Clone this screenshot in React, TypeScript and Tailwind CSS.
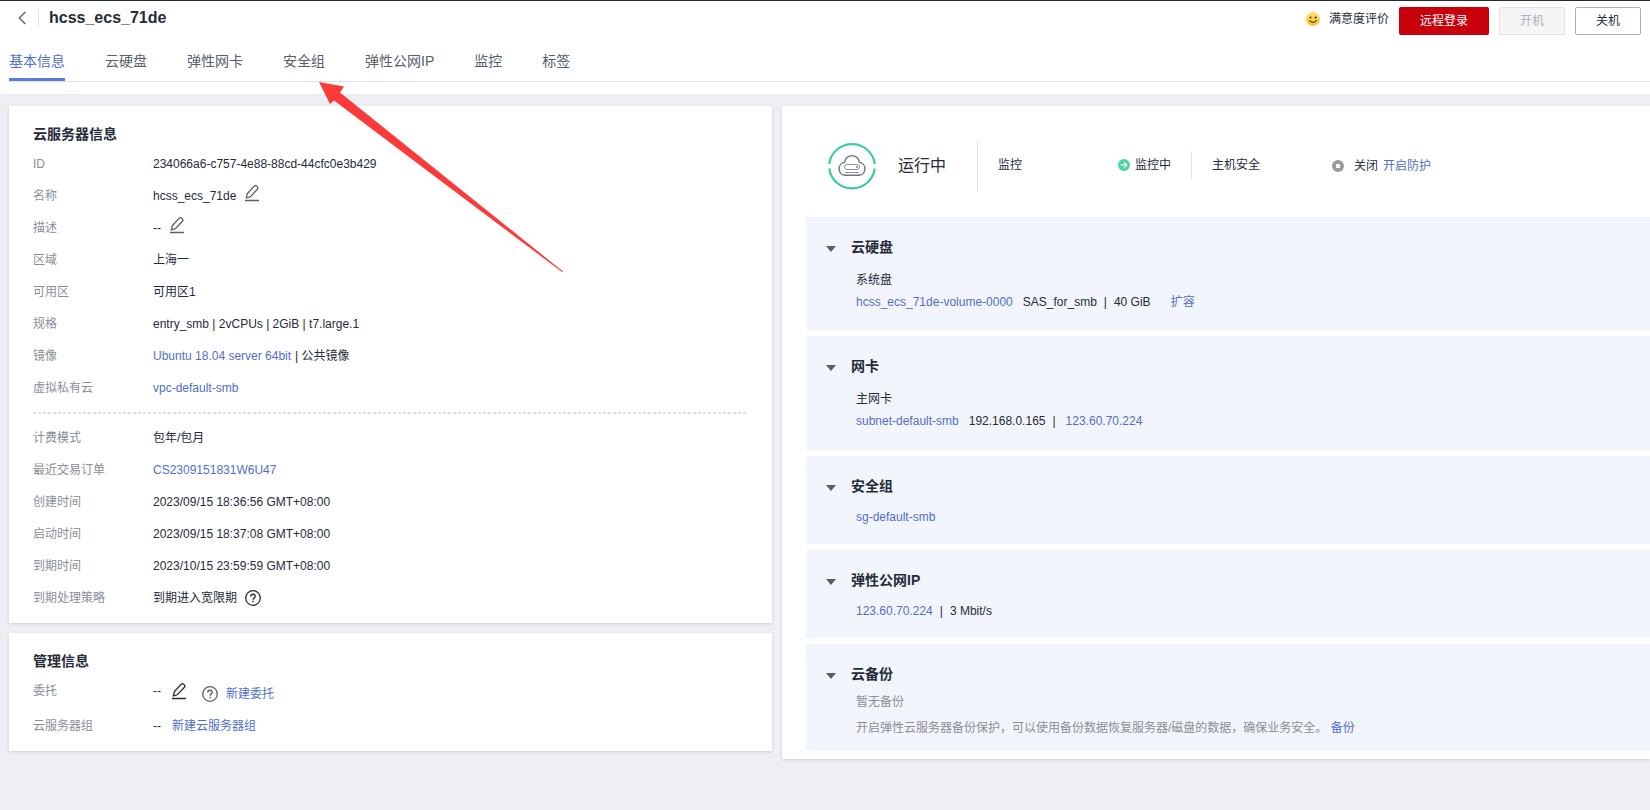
import type { ReactNode } from 'react'

const tabs = ['基本信息', '云硬盘', '弹性网卡', '安全组', '弹性公网IP', '监控', '标签']

const EditIcon = ({ className = 'text-[#575d6c]' }: { className?: string }) => (
  <svg width="14" height="22" viewBox="0 0 14 22" fill="none" stroke="currentColor" className={className}>
    <path d="M1.3 13 2.3 8.8 9 1.4Q10.3.1 11.7 1.2L12.2 1.7Q13.5 2.9 12.5 4.2L5.4 11.6Z" strokeWidth="1.3" strokeLinejoin="round" />
    <path d="M0 15.5H14" strokeWidth="1.5" />
  </svg>
)

const HelpIcon = ({ className = 'text-[#252b3a]' }: { className?: string }) => (
  <svg width="16" height="16" viewBox="0 0 16 16" fill="none" stroke="currentColor" className={className}>
    <circle cx="8" cy="8" r="7.3" strokeWidth="1.3" />
    <path d="M5.8 6.4C5.8 3.5 10.3 3.6 10.3 6.2C10.3 7.8 8.1 7.9 8.1 9.7" strokeWidth="1.4" />
    <path d="M8.1 10.7V12.2" strokeWidth="1.5" />
  </svg>
)

const SmileIcon = () => (
  <svg width="14" height="14" viewBox="0 0 14 14" fill="none">
    <defs>
      <linearGradient id="smile" x1="0" y1="0" x2="0" y2="1">
        <stop offset="0" stopColor="#ffe07a" />
        <stop offset="1" stopColor="#fbc31c" />
      </linearGradient>
    </defs>
    <circle cx="7" cy="7" r="7" fill="url(#smile)" />
    <circle cx="4.5" cy="5.5" r="1" fill="#3d3520" />
    <circle cx="9.7" cy="5.5" r="1" fill="#3d3520" />
    <path d="M3.6 8.7Q7 12.2 10.4 8.7" stroke="#3d3520" strokeWidth="1.1" strokeLinecap="round" />
  </svg>
)

const RunningIcon = () => (
  <svg width="48" height="48" viewBox="0 0 48 48" fill="none">
    <path d="M1.2 22A23 23 0 0 1 46.8 22M46.8 26.5A23 23 0 0 1 1.2 26.5" stroke="#3dcca6" strokeWidth="2.2" />
    <g stroke="#71757f">
      <path
        d="M17 33.3A6.5 6.5 0 0 1 16.6 20.4C17 16 20.5 13.6 24 13.6S31 16 31.4 20.4A6.5 6.5 0 0 1 31 33.3Z"
        strokeWidth="1.4"
      />
      <rect x="16.5" y="22.5" width="15" height="5" rx="2.5" strokeWidth="0.8" />
      <path d="M17 30.5H31" strokeWidth="0.8" />
    </g>
    <circle cx="29" cy="25" r="0.9" fill="#71757f" />
  </svg>
)

const Link = ({ children }: { children: ReactNode }) => (
  <a href="#" className="text-[#526ecc] hover:underline">
    {children}
  </a>
)

const Row = ({ label, children }: { label: string; children: ReactNode }) => (
  <div className="flex h-8 items-center">
    <dt className="w-[120px] shrink-0 text-[#8a8e99]">{label}</dt>
    <dd className="flex items-center">{children}</dd>
  </div>
)

const Card = ({ title, children }: { title: string; children: ReactNode }) => (
  <section className="bg-white px-6 pt-[18px] pb-[9px] shadow-[0_1px_3px_rgba(37,43,58,0.15)]">
    <h2 className="mb-1 text-sm font-bold">{title}</h2>
    {children}
  </section>
)

const Section = ({ title, className, children }: { title: string; className: string; children: ReactNode }) => (
  <section className="bg-[#f2f5fc] pt-5 pl-5">
    <button type="button" className="flex items-center gap-[15px] text-sm font-bold">
      <svg width="10" height="6" viewBox="0 0 10 6" className="mt-[3px]">
        <path d="M0 0H10L5 6Z" fill="#575d6c" />
      </svg>
      <h3>{title}</h3>
    </button>
    <div className={`pl-[30px] leading-[22px] ${className}`}>{children}</div>
  </section>
)

const Header = () => (
  <header className="border-t border-[#252b3a] bg-white pb-3">
    <div className="flex h-10 items-start justify-between pt-[6px] pr-[9px] pl-[18px]">
      <div className="flex h-[22px] items-center">
        <button type="button" aria-label="返回">
          <svg width="8" height="14" viewBox="0 0 8 14" fill="none" stroke="#575d6c" strokeWidth="1.3">
            <path d="M7.3 1 1.3 7 7.3 13" />
          </svg>
        </button>
        <span className="mr-[10px] ml-3 h-4 w-px bg-[#dfe1e6]" />
        <h1 className="text-base font-bold">hcss_ecs_71de</h1>
      </div>
      <div className="flex gap-[10px]">
        <button type="button" className="flex h-6 items-center gap-[9px]">
          <SmileIcon />
          满意度评价
        </button>
        <button type="button" className="h-7 w-[90px] rounded-[2px] bg-[#c7000b] text-white">
          远程登录
        </button>
        <button type="button" disabled className="h-7 w-[66px] rounded-[2px] border border-[#dfe1e6] bg-[#f5f5f6] text-[#adb0b8]">
          开机
        </button>
        <button type="button" className="h-7 w-[66px] rounded-[2px] border border-[#adb0b8] bg-white">
          关机
        </button>
      </div>
    </div>
    <nav className="ml-[9px] flex gap-10 border-b border-[#dfe1e6] text-sm">
      {tabs.map((tab, i) => (
        <button
          key={tab}
          type="button"
          className={
            i === 0
              ? 'h-10 border-b-[3px] border-[#5e7ce0] pt-[3px] text-[#526ecc]'
              : 'h-10 border-b-[3px] border-transparent pt-[3px] text-[#575d6c]'
          }
        >
          {tab}
        </button>
      ))}
    </nav>
  </header>
)

const ServerInfo = () => (
  <Card title="云服务器信息">
    <dl>
      <Row label="ID">234066a6-c757-4e88-88cd-44cfc0e3b429</Row>
      <Row label="名称">
        hcss_ecs_71de
        <button type="button" aria-label="修改名称" className="ml-[9px]">
          <EditIcon />
        </button>
      </Row>
      <Row label="描述">
        --
        <button type="button" aria-label="修改描述" className="ml-[9px]">
          <EditIcon />
        </button>
      </Row>
      <Row label="区域">上海一</Row>
      <Row label="可用区">可用区1</Row>
      <Row label="规格">entry_smb | 2vCPUs | 2GiB | t7.large.1</Row>
      <Row label="镜像">
        <Link>Ubuntu 18.04 server 64bit</Link>
        <span className="ml-1">| 公共镜像</span>
      </Row>
      <Row label="虚拟私有云">
        <Link>vpc-default-smb</Link>
      </Row>
    </dl>
    <div className="my-2 h-[2px] bg-[repeating-linear-gradient(90deg,#dfe1e6_0_3px,transparent_3px_5px)]" />
    <dl>
      <Row label="计费模式">包年/包月</Row>
      <Row label="最近交易订单">
        <Link>CS2309151831W6U47</Link>
      </Row>
      <Row label="创建时间">2023/09/15 18:36:56 GMT+08:00</Row>
      <Row label="启动时间">2023/09/15 18:37:08 GMT+08:00</Row>
      <Row label="到期时间">2023/10/15 23:59:59 GMT+08:00</Row>
      <Row label="到期处理策略">
        <span className="mr-2">到期进入宽限期</span>
        <HelpIcon />
      </Row>
    </dl>
  </Card>
)

const ManageInfo = () => (
  <Card title="管理信息">
    <dl className="flex flex-col gap-[3px]">
      <Row label="委托">
        --
        <button type="button" aria-label="修改委托" className="mt-[6px] ml-[11px]">
          <EditIcon className="text-[#252b3a]" />
        </button>
        <span className="mt-[6px] ml-4 flex items-center gap-2">
          <HelpIcon className="text-[#575d6c]" />
          <Link>新建委托</Link>
        </span>
      </Row>
      <Row label="云服务器组">
        <span className="mr-[11px]">--</span>
        <Link>新建云服务器组</Link>
      </Row>
    </dl>
  </Card>
)

const StatusBar = () => (
  <div className="flex h-[111px] items-center pt-[9px] pl-[22px]">
    <RunningIcon />
    <span className="ml-[22px] text-base">运行中</span>
    <span className="ml-[31px] h-[52px] w-px bg-[#dfe1e6]" />
    <div className="mb-[2px] flex items-center">
      <span className="ml-5 w-[120px]">监控</span>
      <svg width="12" height="12" viewBox="0 0 12 12" fill="none">
        <circle cx="6" cy="6" r="6" fill="#50d4ab" />
        <path d="M2.8 6H8.8M6.2 3.4 8.8 6 6.2 8.6" stroke="#fff" strokeWidth="1.2" />
      </svg>
      <span className="ml-[5px]">监控中</span>
      <span className="ml-5 h-7 w-px bg-[#dfe1e6]" />
      <span className="ml-5 w-[120px]">主机安全</span>
    </div>
    <div className="flex items-center">
      <svg width="12" height="12" viewBox="0 0 12 12" fill="none">
        <circle cx="6" cy="6" r="6" fill="#9b9b9b" />
        <rect x="4" y="4" width="4" height="4" rx="0.5" fill="#fff" />
      </svg>
      <span className="mr-[5px] ml-[10px]">关闭</span>
      <Link>开启防护</Link>
    </div>
  </div>
)

const Resources = () => (
  <div className="flex flex-col gap-[6px]">
    <Section title="云硬盘" className="pt-3 pb-[17px]">
      <p>系统盘</p>
      <div className="flex">
        <Link>hcss_ecs_71de-volume-0000</Link>
        <span className="mr-5 ml-[10px] flex gap-[7px]">
          SAS_for_smb <span>|</span> 40 GiB
        </span>
        <Link>扩容</Link>
      </div>
    </Section>
    <Section title="网卡" className="pt-3 pb-[18px]">
      <p>主网卡</p>
      <div className="flex">
        <Link>subnet-default-smb</Link>
        <span className="mr-[10px] ml-[10px] flex gap-[7px]">
          192.168.0.165 <span>|</span>
        </span>
        <Link>123.60.70.224</Link>
      </div>
    </Section>
    <Section title="安全组" className="pt-[10px] pb-4">
      <Link>sg-default-smb</Link>
    </Section>
    <Section title="弹性公网IP" className="pt-[10px] pb-4">
      <div className="flex gap-[7px]">
        <Link>123.60.70.224</Link>
        <span>|</span>
        <span>3 Mbit/s</span>
      </div>
    </Section>
    <Section title="云备份" className="flex flex-col gap-1 pt-[7px] pb-[11px] text-[#8a8e99]">
      <p>暂无备份</p>
      <p>
        开启弹性云服务器备份保护，可以使用备份数据恢复服务器/磁盘的数据，确保业务安全。 <Link>备份</Link>
      </p>
    </Section>
  </div>
)

export default function App() {
  return (
    <div className="relative min-h-screen bg-[#eeeff4] font-['Liberation_Sans','Noto_Sans_CJK_SC',sans-serif] text-xs text-[#252b3a]">
      <Header />
      <main className="grid grid-cols-[763fr_868fr] items-start gap-[10px] py-3 pl-[9px]">
        <div className="flex flex-col gap-[10px]">
          <ServerInfo />
          <ManageInfo />
        </div>
        <div className="bg-white pb-[9px] pl-6 shadow-[0_1px_3px_rgba(37,43,58,0.15)]">
          <StatusBar />
          <Resources />
        </div>
      </main>
      {/* arrow drawn over the page, pointing at the 安全组 tab */}
      <svg
        width="246"
        height="192"
        viewBox="0 0 246 192"
        className="pointer-events-none absolute top-[82px] left-[319px]"
      >
        <path d="M0 0 25 4.5 21 10.5 244 189.5 243 190 15 18.5 11 22Z" fill="#fc3a3a" />
      </svg>
    </div>
  )
}
